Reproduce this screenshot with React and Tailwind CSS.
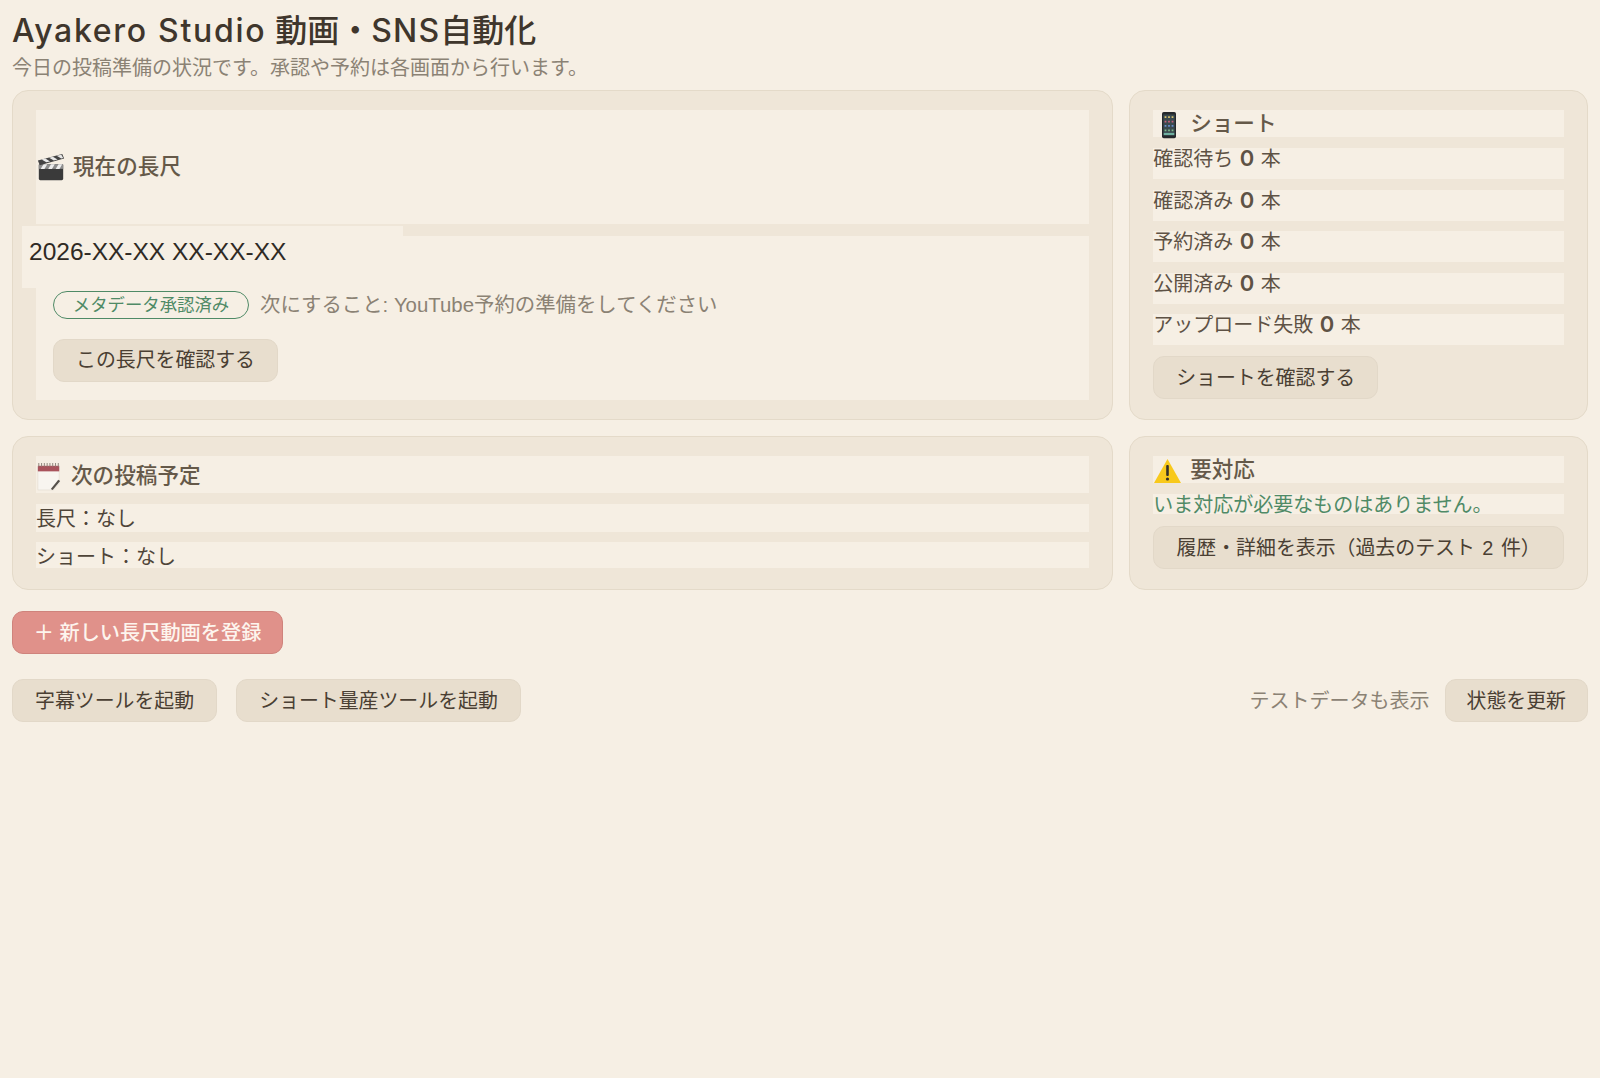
function Clapper() {
  return (
    <svg viewBox="0 0 32 32" className="w-[30px] h-[30px] shrink-0">
      <rect x="3" y="13" width="26" height="17" rx="1.5" fill="#3a3a3a" />
      <rect x="3" y="13" width="26" height="5" fill="#8d8d8d" />
      <path d="M5 18l3-5h4l-3 5zM13 18l3-5h4l-3 5zM21 18l3-5h4l-3 5z" fill="#eee" />
      <path d="M2 9 L28 2 L30 7 L4 14 Z" fill="#444" />
      <path d="M6 8l5 3 4-1-5-3zM14 6l5 3 4-1-5-3zM22 4l5 3 2-.5-2-3.5z" fill="#e8e8e8" />
    </svg>
  )
}

function Memo() {
  return (
    <svg viewBox="0 0 28 32" className="w-[26px] h-[30px] shrink-0">
      <path d="M2 6h23v18l-6 7H2z" fill="#f8f5f0" stroke="#e0d9ce" strokeWidth="0.6" />
      <rect x="2" y="5" width="23" height="6" fill="#a9535c" />
      <path d="M3 2v4M6 2v4M9 2v4M12 2v4M15 2v4M18 2v4M21 2v4M24 2v4" stroke="#8b8178" strokeWidth="1" />
      <path d="M16 30l8-10 2 1.500-8 9.500z" fill="#55504a" />
    </svg>
  )
}

function Phone() {
  return (
    <svg viewBox="0 0 20 32" className="w-[20px] h-[28px] shrink-0">
      <rect x="2" y="1" width="16" height="30" rx="2" fill="#25282b" />
      <rect x="3.500" y="4" width="13" height="24" fill="#3b4a50" />
      <path d="M5 6h2v2H5zM9 6h2v2H9zM13 6h2v2h-2z" fill="#d9c26a" />
      <path d="M5 11h2v2H5zM9 11h2v2H9zM13 11h2v2h-2z" fill="#c9607c" />
      <path d="M5 16h2v2H5zM9 16h2v2H9zM13 16h2v2h-2z" fill="#6a8fd0" />
      <path d="M5 21h2v2H5zM9 21h2v2H9zM13 21h2v2h-2z" fill="#7dbb8a" />
      <rect x="4" y="25" width="12" height="2.500" fill="#6fb0a0" />
    </svg>
  )
}

function Warning() {
  return (
    <svg viewBox="0 0 28 26" className="w-[29px] h-[26px] shrink-0">
      <path d="M14 1 L27.500 25 H.5 Z" fill="#f8c91c" strokeLinejoin="round" />
      <rect x="12.700" y="7" width="2.600" height="11" rx="1" fill="#33302a" />
      <circle cx="14" cy="21" r="1.600" fill="#33302a" />
    </svg>
  )
}

function Btn({ className = '', children }) {
  return (
    <button className={`h-[43px] px-[22px] pt-[2px] rounded-[11px] border border-[#e2d8c8] bg-[#e8dece] text-[#4a3f33] text-[19.900px] leading-none whitespace-nowrap ${className}`}>
      {children}
    </button>
  )
}

function Card({ className = '', children }) {
  return (
    <section className={`rounded-[16px] border border-[#e4dac9] bg-[#efe6d8] ${className}`}>
      {children}
    </section>
  )
}

const shortRows = ['確認待ち', '確認済み', '予約済み', '公開済み', 'アップロード失敗']

export default function App() {
  return (
    <div className="min-h-[1078px] bg-[#f6efe4] px-3 pt-[11px] font-['Liberation_Sans','Noto_Sans_CJK_JP',sans-serif]">
      <h1 className="text-[32px] leading-[40px] font-medium text-[#3f362c]">
        <span className="font-['Inter'] tracking-[1.700px]">Ayakero Studio</span> 動画・<span className="font-['Inter'] tracking-[1.200px]">SNS</span>自動化
      </h1>
      <p className="mt-[3px] text-[20px] leading-[28px] text-[#8b8274]">今日の投稿準備の状況です。承認や予約は各画面から行います。</p>

      <div className="grid grid-cols-[2.4fr_1fr] gap-4 mt-[8px]">
        <Card className="px-[23px] pt-[19px] h-[330px]">
          <h2 className="h-[114px] bg-[#f6efe4] flex items-center gap-[7px] text-[21.600px] font-medium text-[#655949]">
            <Clapper />
            現在の長尺
          </h2>
          <div className="mt-3 h-[164px] bg-[#f6efe4] flow-root">
            <div className="-mt-[10px] -ml-[14px] w-[381px] h-[62px] bg-[#f6efe4] px-[7px] pb-[10px] flex items-center text-[24.500px] text-[#2f2a24]">
              2026-XX-XX XX-XX-XX
            </div>
            <div className="pl-[17px] mt-[2px] flex items-center gap-[11px]">
              <span className="h-[28px] w-[196px] rounded-full border border-[#4f8a66] flex items-center justify-center text-[17.400px] text-[#4f8a66] whitespace-nowrap">
                メタデータ承認済み
              </span>
              <span className="text-[20.400px] text-[#8b8274] whitespace-nowrap">次にすること: YouTube予約の準備をしてください</span>
            </div>
            <div className="pl-[17px] mt-[18px]">
              <Btn>この長尺を確認する</Btn>
            </div>
          </div>
        </Card>

        <Card className="px-[23px] pt-[19px] h-[330px]">
          <h2 className="h-[27px] bg-[#f6efe4] flex items-center gap-[11px] pl-[6px] pt-[2px] text-[21.600px] font-medium text-[#655949]">
            <Phone />
            ショート
          </h2>
          <ul className="mt-[11px] flex flex-col gap-[10.600px]">
            {shortRows.map((label) => (
              <li key={label} className="h-[31px] bg-[#f6efe4] text-[20px] leading-[20px] text-[#5e5245] whitespace-nowrap">
                {label} <b className="font-['Inter'] font-semibold text-[22px] mx-[1px]">0</b> 本
              </li>
            ))}
          </ul>
          <Btn className="mt-[11px]">ショートを確認する</Btn>
        </Card>

        <Card className="px-[23px] pt-[19px] h-[154px]">
          <h2 className="h-[37px] bg-[#f6efe4] flex items-center gap-[9px] pt-[3px] text-[21.600px] font-medium text-[#655949]">
            <Memo />
            次の投稿予定
          </h2>
          <p className="mt-[11px] h-[28px] bg-[#f6efe4] text-[20px] leading-[30px] text-[#4f4539]">長尺：なし</p>
          <p className="mt-[10px] h-[26px] bg-[#f6efe4] text-[20px] leading-[30px] text-[#4f4539]">ショート：なし</p>
        </Card>

        <Card className="px-[23px] pt-[19px] h-[154px]">
          <h2 className="h-[27px] bg-[#f6efe4] flex items-center gap-[8px] pt-[2px] text-[21.600px] font-medium text-[#655949]">
            <Warning />
            要対応
          </h2>
          <p className="mt-[11px] h-[20px] bg-[#f6efe4] text-[20px] leading-[22px] text-[#4f8a66] whitespace-nowrap">いま対応が必要なものはありません。</p>
          <Btn className="mt-3 w-full !px-0 text-center">履歴・詳細を表示（過去のテスト <span className="mx-[2px]">2</span> 件）</Btn>
        </Card>
      </div>

      <button className="mt-[21px] h-[43px] w-[271px] pt-[2px] rounded-[11px] border border-[#cf837c] bg-[#e0918a] text-[#fdf5ee] text-[20.200px] font-medium leading-none whitespace-nowrap">
        ＋ 新しい長尺動画を登録
      </button>

      <div className="mt-[25px] flex items-center gap-[19px]">
        <Btn>字幕ツールを起動</Btn>
        <Btn>ショート量産ツールを起動</Btn>
        <div className="ml-auto flex items-center gap-[15px]">
          <span className="text-[20px] text-[#8b8274] whitespace-nowrap">テストデータも表示</span>
          <Btn className="!px-[21px]">状態を更新</Btn>
        </div>
      </div>
    </div>
  )
}
